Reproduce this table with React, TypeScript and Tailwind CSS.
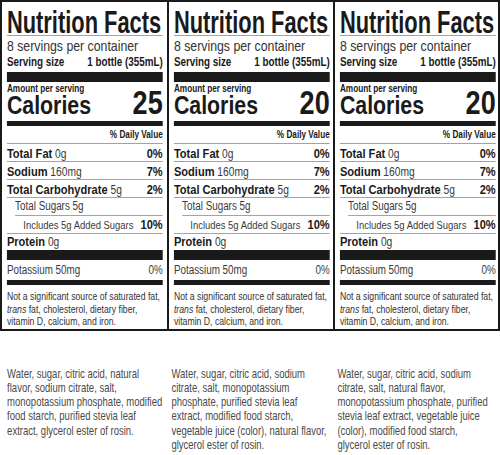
import React from "react";

type Panel = {
    calories: string;
    ingredients: string[];
};

const panels: Panel[] = [
    {
        calories: "25",
        ingredients: [
            "Water, sugar, citric acid, natural",
            "flavor, sodium citrate, salt,",
            "monopotassium phosphate, modified",
            "food starch, purified stevia leaf",
            "extract, glycerol ester of rosin.",
        ],
    },
    {
        calories: "20",
        ingredients: [
            "Water, sugar, citric acid, sodium",
            "citrate, salt, monopotassium",
            "phosphate, purified stevia leaf",
            "extract, modified food starch,",
            "vegetable juice (color), natural flavor,",
            "glycerol ester of rosin.",
        ],
    },
    {
        calories: "20",
        ingredients: [
            "Water, sugar, citric acid, sodium",
            "citrate, salt, natural flavor,",
            "monopotassium phosphate, purified",
            "stevia leaf extract, vegetable juice",
            "(color), modified food starch,",
            "glycerol ester of rosin.",
        ],
    },
];

// no condensed face installed, so the whole label is squeezed horizontally
const font = "font-['Liberation_Sans',Arial,sans-serif]";

function Rule({ indent = false }: { indent?: boolean }) {
    return <div className={`h-px bg-[#a3a3a3] ${indent ? "ml-[10px]" : ""}`} />;
}

function Nutrient({ label, amount, dv }: { label: string; amount: string; dv: string }) {
    return (
        <>
            <div className="flex h-[17px] items-baseline justify-between leading-[17px]">
                <span>
                    <b className="text-[13.5px] font-bold">{label}</b>
                    <span className="text-[12.5px] text-[#3a3a3a]"> {amount}</span>
                </span>
                <b className="text-[13.5px] font-bold">{dv}</b>
            </div>
            <Rule />
        </>
    );
}

function Label({ calories }: { calories: string }) {
    return (
        <div className="w-[200px] origin-top-left scale-x-[0.82] pr-[4px] pl-[6px] text-[#1a1a1a]">
            {/* header */}
            <div className="h-[33px] pt-[9px] leading-[24px]">
                <span className="inline-block origin-left scale-x-[0.86] whitespace-nowrap text-[31px] font-bold">
                    Nutrition Facts
                </span>
            </div>
            <Rule />
            <div className="h-[19px] text-[15px] leading-[19px] whitespace-nowrap text-[#333]">8 servings per container</div>
            <div className="flex h-[14px] justify-between text-[12px] font-bold leading-[14px] whitespace-nowrap">
                <span>Serving size</span>
                <span>1 bottle (355mL)</span>
            </div>
            <div className="mt-[3px] h-[10px] bg-[#1a1a1a]" />

            {/* calories */}
            <div className="h-[14px] text-[10px] font-bold leading-[14px]">Amount per serving</div>
            <div className="flex h-[25px] items-baseline justify-between font-bold">
                <span className="text-[26px] leading-[14px]">Calories</span>
                <span className="text-[33px] leading-[14px]">{calories}</span>
            </div>
            <div className="h-[5px] bg-[#1a1a1a]" />

            {/* nutrients */}
            <div className="h-[17px] text-right text-[10px] font-bold leading-[17px]">% Daily Value</div>
            <Rule />
            <Nutrient label="Total Fat" amount="0g" dv="0%" />
            <Nutrient label="Sodium" amount="160mg" dv="7%" />
            <Nutrient label="Total Carbohydrate" amount="5g" dv="2%" />
            <div className="h-[17px] pl-[10px] text-[12px] leading-[17px] text-[#3a3a3a]">Total Sugars 5g</div>
            <Rule indent />
            <div className="flex h-[17px] items-baseline justify-between pl-[20px] leading-[17px]">
                <span className="text-[11.5px] text-[#3a3a3a]">Includes 5g Added Sugars</span>
                <b className="text-[13.5px] font-bold">10%</b>
            </div>
            <Rule />
            <div className="h-[16px] leading-[14px]">
                <b className="text-[13.5px] font-bold">Protein</b>
                <span className="text-[12.5px] text-[#3a3a3a]"> 0g</span>
            </div>
            <div className="h-[10px] bg-[#1a1a1a]" />
            <div className="flex h-[20px] justify-between text-[12px] leading-[20px] text-[#3a3a3a]">
                <span>Potassium 50mg</span>
                <span>0%</span>
            </div>
            <div className="h-[5px] bg-[#1a1a1a]" />

            {/* footnote */}
            <p className="pt-[5px] pb-[1px] text-[10.6px] leading-[12.5px] text-[#333]">
                Not a significant source of saturated fat, <i>trans</i> fat, cholesterol, dietary fiber, vitamin D, calcium, and iron.
            </p>
        </div>
    );
}

export default function App() {
    return (
        <div className={`h-[455px] w-[500px] overflow-hidden bg-white ${font}`}>
            <div className="grid grid-cols-3 border-2 border-[#1a1a1a]">
                {panels.map((p, i) => (
                    <div key={i} className={`overflow-hidden ${i > 0 ? "border-l-2 border-[#1a1a1a]" : ""}`}>
                        <Label calories={p.calories} />
                    </div>
                ))}
            </div>

            {/* ingredients */}
            <div className="mt-[36px] grid grid-cols-3 px-[2px]">
                {panels.map((p, i) => (
                    <div key={i} className="overflow-hidden">
                        <div
                            className={`w-[225px] origin-top-left scale-x-[0.73] text-[13px] leading-[14.25px] whitespace-nowrap text-[#4a4a4a] ${i === 0 ? "pl-[7px]" : "pl-[6px]"}`}
                        >
                            {p.ingredients.map((line) => (
                                <div key={line}>{line}</div>
                            ))}
                        </div>
                    </div>
                ))}
            </div>
        </div>
    );
}
